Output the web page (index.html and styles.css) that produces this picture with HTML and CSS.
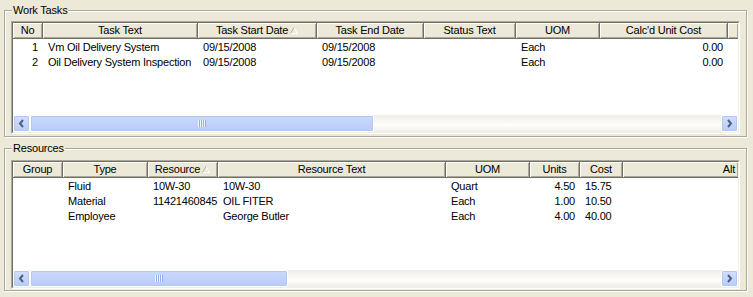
FILE: index.html
```html
<!DOCTYPE html>
<html>
<head>
<meta charset="utf-8">
<link rel="stylesheet" href="styles.css">
</head>
<body>
<div class="page">
  <div class="group g1">
    <span class="legend">Work Tasks</span>
    <div class="grid grid1">
      <div class="inner">
        <div class="hdr">
          <div class="hc" style="width:30px">No</div>
          <div class="hc" style="width:155px">Task Text</div>
          <div class="hc" style="width:119px">Task Start Date<svg class="sort" width="8" height="7" viewBox="0 0 8 7"><path d="M0.5 6.5 L4 0.5 L7.5 6.5 Z" fill="none" stroke="#fff" stroke-width="1"/><path d="M0.5 6.5 L4 0.5" fill="none" stroke="#ACA899" stroke-width="1"/></svg></div>
          <div class="hc" style="width:107px">Task End Date</div>
          <div class="hc" style="width:92px">Status Text</div>
          <div class="hc" style="width:84px">UOM</div>
          <div class="hc" style="width:128px">Calc'd Unit Cost</div>
          <div class="hc hfill"></div>
        </div>
        <div class="body b1">
          <div class="row">
            <div class="c r" style="width:30px">1</div>
            <div class="c" style="width:155px">Vm Oil Delivery System</div>
            <div class="c" style="width:119px">09/15/2008</div>
            <div class="c" style="width:107px">09/15/2008</div>
            <div class="c" style="width:92px"></div>
            <div class="c" style="width:84px">Each</div>
            <div class="c r" style="width:128px">0.00</div>
          </div>
          <div class="row">
            <div class="c r" style="width:30px">2</div>
            <div class="c" style="width:155px">Oil Delivery System Inspection</div>
            <div class="c" style="width:119px">09/15/2008</div>
            <div class="c" style="width:107px">09/15/2008</div>
            <div class="c" style="width:92px"></div>
            <div class="c" style="width:84px">Each</div>
            <div class="c r" style="width:128px">0.00</div>
          </div>
        </div>
        <div class="sb">
          <div class="btn"><svg width="15" height="15" viewBox="0 0 15 15"><path d="M9 4 L6 7.5 L9 11" fill="none" stroke="#4D6185" stroke-width="2"/></svg></div>
          <div class="track">
            <div class="thumb" style="width:344px"><svg width="8" height="7" viewBox="0 0 8 7"><path d="M0.5 0V7M2.5 0V7M4.5 0V7M6.5 0V7" stroke="#EEF4FE" stroke-width="1"/><path d="M1.5 0V7M3.5 0V7M5.5 0V7M7.5 0V7" stroke="#8CB0F8" stroke-width="1"/></svg></div>
          </div>
          <div class="btn"><svg width="15" height="15" viewBox="0 0 15 15"><path d="M6 4 L9 7.5 L6 11" fill="none" stroke="#4D6185" stroke-width="2"/></svg></div>
        </div>
      </div>
    </div>
  </div>

  <div class="group g2">
    <span class="legend">Resources</span>
    <div class="grid grid2">
      <div class="inner">
        <div class="hdr">
          <div class="hc" style="width:50px">Group</div>
          <div class="hc" style="width:85px">Type</div>
          <div class="hc" style="width:70px">Resource<svg class="sort" width="8" height="7" viewBox="0 0 8 7"><path d="M0.5 6.5 L4 0.5 L7.5 6.5 Z" fill="none" stroke="#fff" stroke-width="1"/><path d="M0.5 6.5 L4 0.5" fill="none" stroke="#ACA899" stroke-width="1"/></svg></div>
          <div class="hc" style="width:228px">Resource Text</div>
          <div class="hc" style="width:84px">UOM</div>
          <div class="hc" style="width:50px">Units</div>
          <div class="hc" style="width:43px">Cost</div>
          <div class="hc hfill hr">Alt</div>
        </div>
        <div class="body b2">
          <div class="row">
            <div class="c" style="width:50px"></div>
            <div class="c" style="width:85px">Fluid</div>
            <div class="c" style="width:70px">10W-30</div>
            <div class="c" style="width:228px">10W-30</div>
            <div class="c" style="width:84px">Quart</div>
            <div class="c r" style="width:50px">4.50</div>
            <div class="c" style="width:43px">15.75</div>
          </div>
          <div class="row">
            <div class="c" style="width:50px"></div>
            <div class="c" style="width:85px">Material</div>
            <div class="c" style="width:70px">11421460845</div>
            <div class="c" style="width:228px">OIL FITER</div>
            <div class="c" style="width:84px">Each</div>
            <div class="c r" style="width:50px">1.00</div>
            <div class="c" style="width:43px">10.50</div>
          </div>
          <div class="row">
            <div class="c" style="width:50px"></div>
            <div class="c" style="width:85px">Employee</div>
            <div class="c" style="width:70px"></div>
            <div class="c" style="width:228px">George Butler</div>
            <div class="c" style="width:84px">Each</div>
            <div class="c r" style="width:50px">4.00</div>
            <div class="c" style="width:43px">40.00</div>
          </div>
        </div>
        <div class="sb">
          <div class="btn"><svg width="15" height="15" viewBox="0 0 15 15"><path d="M9 4 L6 7.5 L9 11" fill="none" stroke="#4D6185" stroke-width="2"/></svg></div>
          <div class="track">
            <div class="thumb" style="width:258px"><svg width="8" height="7" viewBox="0 0 8 7"><path d="M0.5 0V7M2.5 0V7M4.5 0V7M6.5 0V7" stroke="#EEF4FE" stroke-width="1"/><path d="M1.5 0V7M3.5 0V7M5.5 0V7M7.5 0V7" stroke="#8CB0F8" stroke-width="1"/></svg></div>
          </div>
          <div class="btn"><svg width="15" height="15" viewBox="0 0 15 15"><path d="M6 4 L9 7.5 L6 11" fill="none" stroke="#4D6185" stroke-width="2"/></svg></div>
        </div>
      </div>
    </div>
  </div>
</div>
</body>
</html>
```
FILE: styles.css
```css
* { box-sizing: border-box; }
html, body {
  margin: 0;
  padding: 0;
  background: #ECE9D8;
  font-family: "Liberation Sans", Arial, sans-serif;
  font-size: 11px;
  letter-spacing: -0.2px;
  color: #000;
  width: 753px;
  height: 297px;
  overflow: hidden;
}
.page {
  padding: 10px 0 0 4px;
  display: flex;
  flex-direction: column;
  gap: 11px;
}
.group {
  position: relative;
  width: 743px;
  border: 1px solid #ACA899;
  box-shadow: inset 1px 1px 0 #fff, 1px 1px 0 #fff;
  padding: 10px 0 0 6px;
}
.g1 { height: 127px; }
.g2 { height: 143px; padding-top: 11px; }
.legend {
  position: absolute;
  left: 7px;
  top: -8px;
  padding: 0 1px;
  background: #ECE9D8;
  line-height: 14px;
}
.grid {
  width: 729px;
  border: 1px solid;
  border-color: #ACA899 #fff #fff #ACA899;
  background: #fff;
}
.grid1 { height: 113px; }
.grid2 { height: 129px; }
.inner {
  height: 100%;
  border: 1px solid;
  border-color: #716F64 #F1EFE2 #F1EFE2 #716F64;
  display: flex;
  flex-direction: column;
  background: #fff;
  overflow: hidden;
}
.hdr {
  display: flex;
  height: 16px;
  flex: none;
}
.hc {
  flex: none;
  height: 16px;
  background: #ECE9D8;
  border-right: 1px solid #716F64;
  border-bottom: 1px solid #716F64;
  box-shadow: inset 1px 1px 0 #fff, inset -1px -1px 0 #ACA899;
  display: flex;
  align-items: center;
  justify-content: center;
  line-height: 13px;
  white-space: nowrap;
  overflow: hidden;
}
.hfill { flex: 1; border-right: none; }
.hr { justify-content: flex-end; padding-right: 3px; }
.sort { margin-left: 2px; margin-top: -1px; }
.body {
  flex: 1;
  background: #fff;
  padding-top: 1px;
}
.row {
  display: flex;
  height: 15px;
  line-height: 15px;
}
.c {
  flex: none;
  padding: 0 0 0 5px;
  white-space: nowrap;
  overflow: hidden;
}
.r { text-align: right; padding: 0 5px 0 0; }
.sb {
  flex: none;
  height: 17px;
  display: flex;
  background: linear-gradient(to bottom, #EEEDE5 0%, #F3F1EC 15%, #FEFEFB 60%, #F3F1EC 90%, #EEEDE5 100%);
}
.btn {
  flex: none;
  width: 17px;
  height: 17px;
  border: 1px solid #fff;
  border-radius: 2px;
  background: linear-gradient(to bottom, #D2DEFB, #BACCF8);
  box-shadow: inset 0 0 0 1px #B4C8F6;
  display: flex;
  align-items: center;
  justify-content: center;
}
.track {
  flex: 1;
  display: flex;
}
.thumb {
  height: 17px;
  border: 1px solid #fff;
  border-radius: 2px;
  background: linear-gradient(to bottom, #CBD8FC, #B8CCF9);
  box-shadow: inset 0 0 0 1px #B4C8F6;
  display: flex;
  align-items: center;
  justify-content: center;
}
```
